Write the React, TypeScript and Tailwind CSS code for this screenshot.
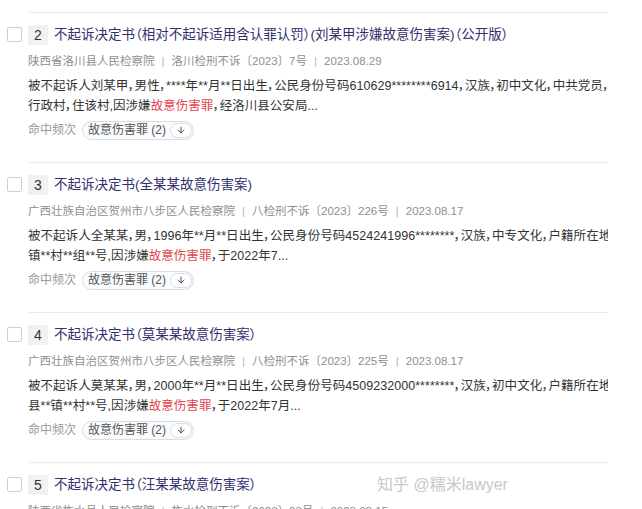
import React from 'react';
import { ArrowDown } from 'lucide-react';

type Doc = {
  no: number;
  title: string;
  court: string;
  code: string;
  date: string;
  line1: string;
  pre: string;
  post: string;
};

const docs: Doc[] = [
  {
    no: 2,
    title: '不起诉决定书（相对不起诉适用含认罪认罚）(刘某甲涉嫌故意伤害案)（公开版）',
    court: '陕西省洛川县人民检察院',
    code: '洛川检刑不诉〔2023〕7号',
    date: '2023.08.29',
    line1: '被不起诉人刘某甲，男性，****年**月**日出生，公民身份号码610629********6914，汉族，初中文化，中共党员，',
    pre: '行政村，住该村,因涉嫌',
    post: '，经洛川县公安局...',
  },
  {
    no: 3,
    title: '不起诉决定书(全某某故意伤害案)',
    court: '广西壮族自治区贺州市八步区人民检察院',
    code: '八检刑不诉〔2023〕226号',
    date: '2023.08.17',
    line1: '被不起诉人全某某，男，1996年**月**日出生，公民身份号码4524241996********，汉族，中专文化，户籍所在地',
    pre: '镇**村**组**号,因涉嫌',
    post: '，于2022年7...',
  },
  {
    no: 4,
    title: '不起诉决定书（莫某某故意伤害案）',
    court: '广西壮族自治区贺州市八步区人民检察院',
    code: '八检刑不诉〔2023〕225号',
    date: '2023.08.17',
    line1: '被不起诉人莫某某，男，2000年**月**日出生，公民身份号码4509232000********，汉族，初中文化，户籍所在地',
    pre: '县**镇**村**号,因涉嫌',
    post: '，于2022年7月...',
  },
  {
    no: 5,
    title: '不起诉决定书（汪某某故意伤害案）',
    court: '陕西省柞水县人民检察院',
    code: '柞水检刑不诉〔2023〕23号',
    date: '2023.08.15',
    line1: '',
    pre: '',
    post: '',
  },
];

const DocItem: React.FC<{ doc: Doc }> = ({ doc }) => (
  <div className="flex">
    {/* checkbox column */}
    <div className="w-[28px] shrink-0">
      <div className="ml-[7px] mt-[15px] h-[15px] w-[15px] rounded-[2px] border border-[#cfcfcf] bg-white"></div>
    </div>

    <div className="w-[580px] border-t border-[#ececec] pt-[12px] pb-[22px]">
      {/* title */}
      <div className="flex h-[20px] items-center gap-[6px] whitespace-nowrap">
        <span className="flex h-[20px] w-[20px] items-center justify-center bg-[#f1f1f1] text-[14px] text-[#333]">
          {doc.no}
        </span>
        <span className="text-[13.5px] leading-[20px] text-[#33306e]">{doc.title}</span>
      </div>

      {/* meta */}
      <div className="mt-[6px] flex h-[20px] items-center gap-[7px] whitespace-nowrap text-[11.5px] leading-[20px] text-[#8f8f8f] [font-feature-settings:normal]">
        <span>{doc.court}</span>
        <span className="text-[#b5b5b5]">|</span>
        <span>{doc.code}</span>
        <span className="text-[#b5b5b5]">|</span>
        <span>{doc.date}</span>
      </div>

      {/* abstract */}
      <div className="mt-[5px] overflow-hidden text-[12.5px] leading-[20px] tracking-[0.04px] text-[#333]">
        <div className="whitespace-nowrap">{doc.line1}</div>
        <div className="whitespace-nowrap">
          {doc.pre}
          <span className="text-[#e3434d]">故意伤害罪</span>
          {doc.post}
        </div>
      </div>

      {/* hit frequency */}
      <div className="mt-[4px] flex h-[20px] items-center gap-[6px] text-[12px]">
        <span className="text-[#999]">命中频次</span>
        <span className="flex h-[19px] items-center gap-[4px] rounded-full border border-[#d6dce8] bg-[#fafbfd] pl-[5px] pr-[1px] text-[#555]">
          <span className="leading-[17px]">故意伤害罪 (2)</span>
          <span className="flex h-[15px] w-[22px] items-center justify-center rounded-full border border-[#d6dce8] bg-white">
            <ArrowDown size={10} strokeWidth={2.2} className="text-[#444]" />
          </span>
        </span>
      </div>
    </div>
  </div>
);

export default function App() {
  return (
    <div className="relative h-[509px] w-[642px] overflow-hidden bg-white pt-[12px] font-['Liberation_Sans','Noto_Sans_CJK_SC',sans-serif] [font-feature-settings:'palt']">
      {docs.map((d) => (
        <DocItem key={d.no} doc={d} />
      ))}

      {/* watermark */}
      <div className="absolute left-[377px] top-[475px] whitespace-nowrap text-[16px] leading-[20px] text-[#c8c8c8] [text-shadow:0_0_2px_#fff]">
        知乎 @糯米lawyer
      </div>
    </div>
  );
}
